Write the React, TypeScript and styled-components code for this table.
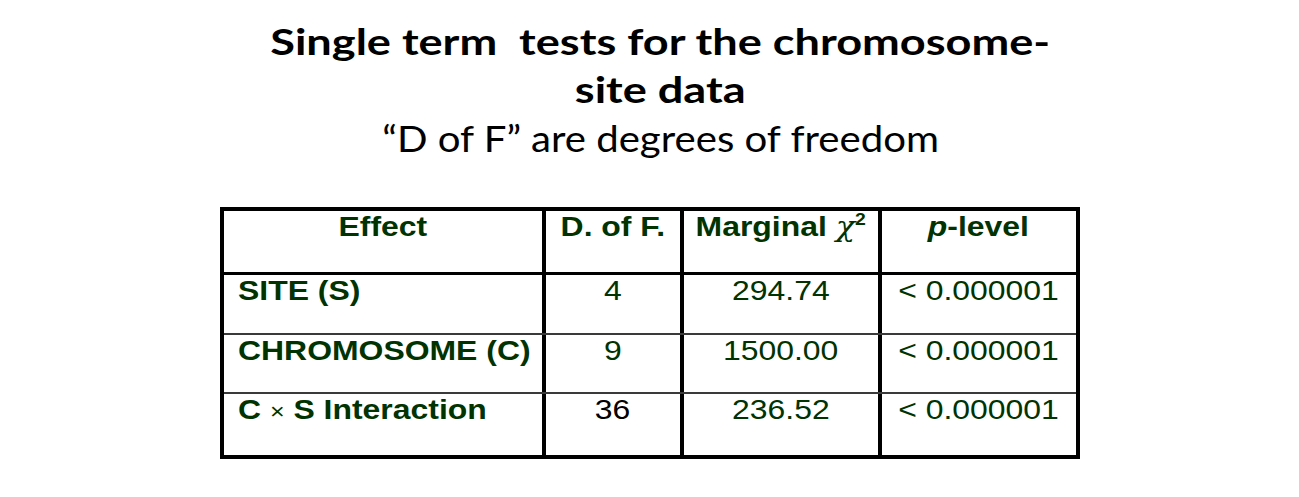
import React from "react";
import styled, { createGlobalStyle } from "styled-components";

const Global = createGlobalStyle`
  html, body { margin: 0; padding: 0; background: #ffffff; }
  body { font-family: "Liberation Sans", Arial, sans-serif; }
`;

const Page = styled.div`
  width: 1299px;
  height: 497px;
  display: flex;
  flex-direction: column;
  align-items: center;
  padding-top: 17px;
  box-sizing: border-box;
`;

const Heading = styled.div`
  display: flex;
  flex-direction: column;
  align-items: center;
  margin-left: 22px;
  color: #000;
  font-family: Lato, "Open Sans", sans-serif;
`;

const Title = styled.h1`
  margin: 0;
  font-size: 36px;
  font-weight: 700;
  line-height: 48px;
  text-align: center;
  white-space: nowrap;
  transform: scaleX(1.253);
`;

const Subtitle = styled.p`
  margin: 1px 0 0;
  font-size: 36px;
  font-weight: 400;
  line-height: 48px;
  text-align: center;
  white-space: nowrap;
  transform: scaleX(1.115);
`;

const Table = styled.div`
  margin-top: 45px;
  width: 860px;
  border: 4px solid #000;
  box-sizing: border-box;
  display: flex;
  flex-direction: column;
`;

const Row = styled.div<{ $h: number; $line: "head" | "row" | "none" }>`
  display: grid;
  grid-template-columns: 318px 138px 198px 198px;
  height: ${(p) => p.$h}px;
  box-sizing: border-box;
  border-bottom: ${(p) =>
    p.$line === "head" ? "3px solid #000" : p.$line === "row" ? "2px solid #3a3a3a" : "none"};
`;

const Cell = styled.div<{ $align: "left" | "center"; $first?: boolean; $black?: boolean }>`
  box-sizing: border-box;
  border-left: ${(p) => (p.$first ? "none" : "4px solid #000")};
  padding: 0 ${(p) => (p.$align === "left" ? "14px" : "0")} 0;
  text-align: ${(p) => p.$align};
  font-family: "Liberation Sans", Arial, sans-serif;
  font-size: 28px;
  line-height: 32px;
  color: ${(p) => (p.$black ? "#000" : "#003300")};
  white-space: nowrap;
`;

const Txt = styled.span<{ $origin: "left" | "center"; $bold?: boolean }>`
  display: inline-block;
  transform: scaleX(1.14);
  transform-origin: ${(p) => p.$origin} center;
  font-weight: ${(p) => (p.$bold ? 700 : 400)};
`;

const Chi = styled.i`
  font-family: "DejaVu Serif", "Liberation Serif", serif;
  font-weight: 400;
  font-size: 28px;
`;

const Sup = styled.sup`
  font-size: 17px;
  vertical-align: 11px;
  line-height: 0;
`;

const Times = styled.span`
  font-weight: 400;
  font-size: 22px;
`;

type RowData = {
  effect: React.ReactNode;
  df: string;
  dfBlack?: boolean;
  chi: string;
  p: string;
  h: number;
  line: "row" | "none";
};

const rows: RowData[] = [
  { effect: "SITE (S)", df: "4", chi: "294.74", p: "< 0.000001", h: 60, line: "row" },
  { effect: "CHROMOSOME (C)", df: "9", chi: "1500.00", p: "< 0.000001", h: 59, line: "row" },
  {
    effect: (
      <>
        C <Times>×</Times> S Interaction
      </>
    ),
    df: "36",
    dfBlack: true,
    chi: "236.52",
    p: "< 0.000001",
    h: 61,
    line: "none",
  },
];

export default function App() {
  return (
    <Page>
      <Global />
      <Heading>
        <Title>
          Single term{"\u00a0"} tests for the chromosome-
          <br />
          site data
        </Title>
        <Subtitle>“D of F” are degrees of freedom</Subtitle>
      </Heading>
      <Table>
        <Row $h={64} $line="head">
          <Cell $align="center" $first>
            <Txt $origin="center" $bold>Effect</Txt>
          </Cell>
          <Cell $align="center">
            <Txt $origin="center" $bold>D. of F.</Txt>
          </Cell>
          <Cell $align="center">
            <Txt $origin="center" $bold>
              Marginal <Chi>χ</Chi>
              <Sup>2</Sup>
            </Txt>
          </Cell>
          <Cell $align="center">
            <Txt $origin="center" $bold>
              <i>p</i>-level
            </Txt>
          </Cell>
        </Row>
        {rows.map((r, i) => (
          <Row key={i} $h={r.h} $line={r.line}>
            <Cell $align="left" $first>
              <Txt $origin="left" $bold>{r.effect}</Txt>
            </Cell>
            <Cell $align="center" $black={r.dfBlack}>
              <Txt $origin="center">{r.df}</Txt>
            </Cell>
            <Cell $align="center">
              <Txt $origin="center">{r.chi}</Txt>
            </Cell>
            <Cell $align="center">
              <Txt $origin="center">{r.p}</Txt>
            </Cell>
          </Row>
        ))}
      </Table>
    </Page>
  );
}
